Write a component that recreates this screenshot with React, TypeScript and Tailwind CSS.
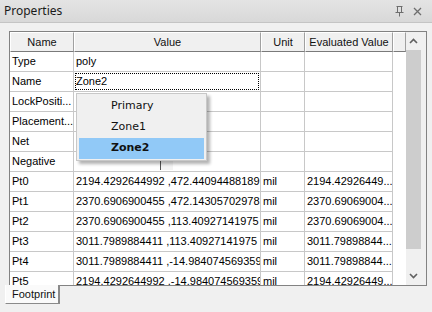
import React from 'react';

type Row = { name: string; value?: string; unit?: string; ev?: string; focus?: boolean };

const rows: Row[] = [
  { name: 'Type', value: 'poly' },
  { name: 'Name', value: 'Zone2', focus: true },
  { name: 'LockPositi...' },
  { name: 'Placement...' },
  { name: 'Net' },
  { name: 'Negative' },
  { name: 'Pt0', value: '2194.4292644992 ,472.44094488189', unit: 'mil', ev: '2194.42926449...' },
  { name: 'Pt1', value: '2370.6906900455 ,472.14305702978', unit: 'mil', ev: '2370.69069004...' },
  { name: 'Pt2', value: '2370.6906900455 ,113.40927141975', unit: 'mil', ev: '2370.69069004...' },
  { name: 'Pt3', value: '3011.7989884411 ,113.40927141975', unit: 'mil', ev: '3011.79898844...' },
  { name: 'Pt4', value: '3011.7989884411 ,-14.984074569359', unit: 'mil', ev: '3011.79898844...' },
  { name: 'Pt5', value: '2194.4292644992 ,-14.984074569359', unit: 'mil', ev: '2194.42926449...' },
];

const cols = 'grid grid-cols-[64px_187px_44px_88px_13px]';
const cell = 'border-r border-b border-[#c8c8c8] overflow-hidden whitespace-nowrap pl-[2px] flex items-center';
const head =
  'bg-[#f0f0f0] border-t border-l border-t-white border-l-white border-r border-b border-r-[#a0a0a0] border-b-[#7a7a7a] flex items-center justify-center text-[#111]';

const Chevron = ({ up }: { up?: boolean }) => (
  <svg width="9" height="6" viewBox="0 0 9 6">
    <path
      d={up ? 'M1 5 L4.5 1.5 L8 5' : 'M1 1 L4.5 4.5 L8 1'}
      fill="none"
      stroke="#606060"
      strokeWidth="1.6"
    />
  </svg>
);

const Pin = () => (
  <svg width="9" height="11" viewBox="0 0 9 11">
    <path d="M1.5 0.5 H7.5 M2.5 0.5 V6 M6.5 0.5 V6 M0.5 6.5 H8.5 M4.5 6.5 V10.5" fill="none" stroke="#6d6d6d" strokeWidth="1" />
  </svg>
);

const Close = () => (
  <svg width="9" height="9" viewBox="0 0 9 9">
    <path d="M1 1 L8 8 M8 1 L1 8" fill="none" stroke="#6d6d6d" strokeWidth="1.3" />
  </svg>
);

const App = () => {
  return (
    <div
      className="relative w-[432px] h-[312px] bg-[#f0f0f0] overflow-hidden"
      style={{ fontFamily: '"Liberation Sans", Arial, sans-serif' }}
    >
      {/* title bar */}
      <div className="h-[23px] flex items-center justify-between pl-[4px] pr-[10px] bg-gradient-to-b from-[#e4e4e4] to-[#d8d8d8] border-b border-[#c4c4c4]">
        <span className="text-[12px] text-[#1a1a1a]" style={{ fontFamily: '"Noto Sans", sans-serif' }}>
          Properties
        </span>
        <div className="flex items-center gap-[9px]">
          <Pin />
          <Close />
        </div>
      </div>

      {/* grid */}
      <div className="pl-[9px] pr-[5px] pt-[8px]">
        <div className="flex border border-[#828282] bg-white text-black">
          <div className="w-[396px]">
            <div className={`${cols} h-[20px] text-[11px]`}>
              <div className={head}>Name</div>
              <div className={head}>Value</div>
              <div className={head}>Unit</div>
              <div className={head}>Evaluated Value</div>
              <div className={head}></div>
            </div>
            <div className="h-[233px] overflow-hidden text-[11px]">
              {rows.map((r) => (
                <div key={r.name} className={`${cols} h-[20px]`}>
                  <div className={cell}>{r.name}</div>
                  <div className={`${cell} relative`}>
                    {r.focus && (
                      <div className="absolute left-[1px] top-[1px] right-[1px] bottom-[1px] border border-dotted border-black" />
                    )}
                    {r.value}
                  </div>
                  <div className={cell}>{r.unit}</div>
                  <div className={cell}>{r.ev}</div>
                  <div></div>
                </div>
              ))}
            </div>
          </div>

          {/* scrollbar */}
          <div className="w-[20px] bg-[#f0f0f0] flex flex-col">
            <div className="w-[15px] h-[18px] flex items-center justify-center">
              <Chevron up />
            </div>
            <div className="w-[15px] h-[199px] bg-[#cdcdcd]" />
            <div className="flex-1" />
            <div className="w-[15px] h-[18px] flex items-center justify-center">
              <Chevron />
            </div>
          </div>
        </div>

        {/* tabs */}
        <div className="flex">
          <div className="ml-[-4px] mt-[-1px] h-[19px] w-[55px] bg-[#fafafa] border-l border-l-white border-r-2 border-r-[#8a8a8a] border-b border-b-[#8a8a8a] flex items-center pl-[6px] text-[11px] text-[#111]">
            Footprint
          </div>
        </div>
      </div>

      {/* dropdown list */}
      <div className="absolute left-[160px] top-[160px] w-[13px] h-[10px] border-l border-[#555] bg-[#f4f4f4]" />
      <div
        className="absolute left-[76px] top-[93px] w-[131px] h-[68px] bg-[#f0f0f0] border border-[#c8c8c8] p-[2px] shadow-[3px_3px_3px_rgba(0,0,0,0.3)] text-[11px] text-[#111]"
        style={{ fontFamily: '"DejaVu Sans", sans-serif' }}
      >
        <div className="h-[21px] flex items-center pl-[32px]">Primary</div>
        <div className="h-[21px] flex items-center pl-[32px]">Zone1</div>
        <div className="h-[21px] flex items-center pl-[32px] bg-[#91c9f7] font-bold">Zone2</div>
      </div>
    </div>
  );
};

export default App;
